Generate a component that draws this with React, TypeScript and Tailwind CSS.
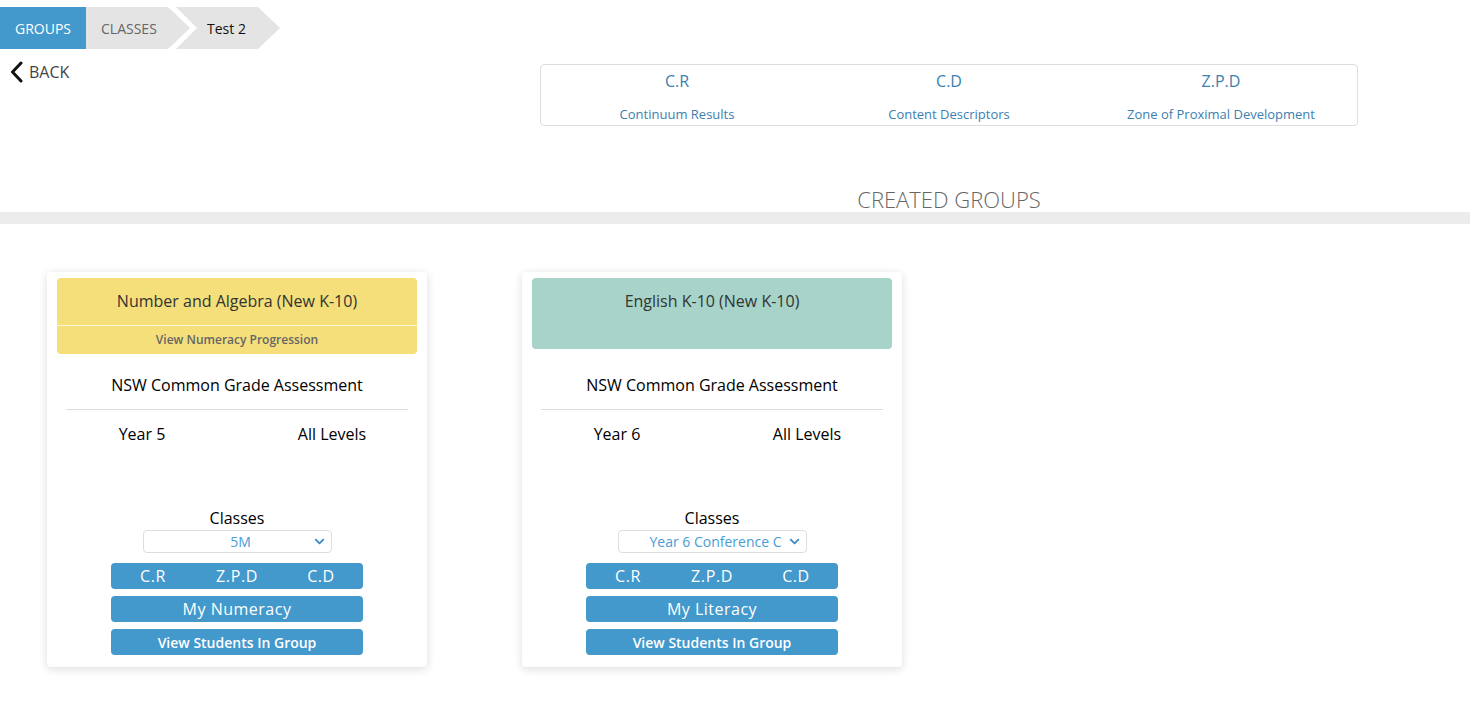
import { ChevronDown } from "lucide-react";

type Group = {
  title: string;
  color: string;
  headerH: string;
  progression?: string;
  year: string;
  className: string;
  myLabel: string;
};

const groups: Group[] = [
  {
    title: "Number and Algebra (New K-10)",
    color: "bg-[#f4df7b]",
    headerH: "h-[76px]",
    progression: "View Numeracy Progression",
    year: "Year 5",
    className: "5M",
    myLabel: "My Numeracy",
  },
  {
    title: "English K-10 (New K-10)",
    color: "bg-[#a7d3c9]",
    headerH: "h-[71px]",
    year: "Year 6",
    className: "Year 6 Conference C",
    myLabel: "My Literacy",
  },
];

function Breadcrumb() {
  return (
    <div className="mt-[7px] flex h-[42px] text-[14px]">
      <div className="flex items-center bg-[#4398cc] px-[15px] text-white">GROUPS</div>
      <div className="flex w-[104px] items-center bg-[#e4e4e4] pl-[15px] text-[#666] [clip-path:polygon(0_0,82px_0,104px_50%,82px_100%,0_100%)]">
        CLASSES
      </div>
      <div className="-ml-[14px] flex w-[104px] items-center bg-[#e4e4e4] pl-[31px] text-[#111] [clip-path:polygon(0_0,82px_0,104px_50%,82px_100%,0_100%,21px_50%)]">
        Test 2
      </div>
    </div>
  );
}

function Legend() {
  const items = [
    ["C.R", "Continuum Results"],
    ["C.D", "Content Descriptors"],
    ["Z.P.D", "Zone of Proximal Development"],
  ];
  return (
    <div className="grid w-[818px] grid-cols-3 rounded border border-[#dddddd] pt-[4px] pb-[2px] text-center text-[#3c80b0]">
      {items.map(([abbr, label]) => (
        <div key={abbr} className="flex flex-col">
          <span className="text-[16px] leading-6">{abbr}</span>
          <span className="mt-[12px] text-[13px] leading-[18px]">{label}</span>
        </div>
      ))}
    </div>
  );
}

function GroupCard({ g }: { g: Group }) {
  return (
    <div className="flex w-[380px] flex-col rounded bg-white px-[10px] pt-[6px] pb-[12px] shadow-[0_2px_10px_rgba(0,0,0,0.14)]">
      <div className="h-[76px]">
        <div className={`${g.color} ${g.headerH} flex flex-col rounded text-center`}>
          <div className={`${g.progression ? "h-[48px] border-b border-[#fff6cf]" : ""} pt-[11px] text-[16px] leading-6 text-[#333]`}>
            {g.title}
          </div>
          {g.progression && (
            <div className="flex flex-1 items-center justify-center text-[12px] font-semibold text-[#666]">
              {g.progression}
            </div>
          )}
        </div>
      </div>
      <div className="mt-[19px] text-center text-[16px] leading-6 text-black">NSW Common Grade Assessment</div>
      <div className="mx-[9px] mt-[12px] border-t border-[#dddddd]" />
      <div className="-mx-[10px] mt-[12px] grid grid-cols-2 text-center text-[16px] leading-6 text-black">
        <span>{g.year}</span>
        <span>All Levels</span>
      </div>
      <div className="mt-[60px] text-center text-[16px] leading-6 text-black">Classes</div>
      <div className="mx-auto flex h-[23px] w-[189px] items-center rounded border border-[#dddddd] pr-[4px] pl-[28px] text-[14px] text-[#4a9bd4]">
        <div className="flex-1 overflow-hidden whitespace-nowrap text-center">{g.className}</div>
        <ChevronDown className="ml-[2px] h-[15px] w-[15px] shrink-0 text-[#3d8ccb]" strokeWidth={3} />
      </div>
      <div className="mx-auto mt-[10px] flex w-[252px] flex-col gap-[7px] text-white">
        <div className="grid h-[26px] grid-cols-3 items-center rounded bg-[#4398cc] text-center text-[16px] tracking-[0.6px]">
          <span>C.R</span>
          <span>Z.P.D</span>
          <span>C.D</span>
        </div>
        <div className="flex h-[26px] items-center justify-center rounded bg-[#4398cc] text-[16px] tracking-[0.5px]">
          {g.myLabel}
        </div>
        <div className="flex h-[26px] items-center justify-center rounded bg-[#4398cc] text-[14px] font-semibold">
          View Students In Group
        </div>
      </div>
    </div>
  );
}

export default function App() {
  return (
    <div className="min-h-[710px] bg-white font-['Open_Sans',sans-serif]">
      <Breadcrumb />
      <div className="mt-[15px] flex">
        <div className="w-[540px]">
          <div className="-mt-[3px] ml-[10px] flex items-center gap-[6px] text-[16px] leading-4 text-[#444]">
            <svg width="13" height="22" viewBox="0 0 13 22" fill="none">
              <path d="M11 2 L2.5 11 L11 20" stroke="#111" strokeWidth="3" strokeLinecap="round" strokeLinejoin="round" />
            </svg>
            <span>BACK</span>
          </div>
        </div>
        <Legend />
      </div>
      <div className="mt-[61px] ml-[540px] h-[25px] w-[818px] text-center text-[22px] leading-6 font-light text-[#666]">
        CREATED GROUPS
      </div>
      <div className="h-3 bg-[#ececec]" />
      <div className="mt-[48px] ml-[47px] flex gap-[95px]">
        {groups.map((g) => (
          <GroupCard key={g.title} g={g} />
        ))}
      </div>
    </div>
  );
}
